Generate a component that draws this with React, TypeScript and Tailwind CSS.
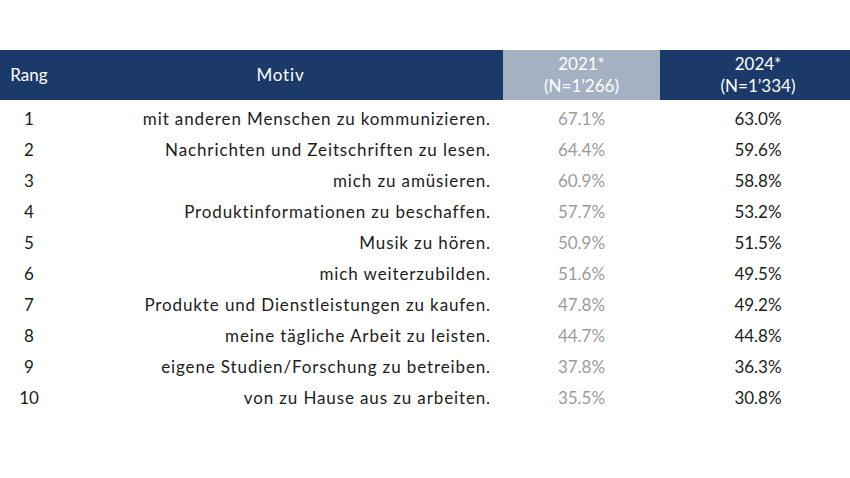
import React from 'react';

interface Row {
  rang: number;
  motiv: string;
  y2021: string;
  y2024: string;
}

const rows: Row[] = [
  { rang: 1, motiv: 'mit anderen Menschen zu kommunizieren.', y2021: '67.1%', y2024: '63.0%' },
  { rang: 2, motiv: 'Nachrichten und Zeitschriften zu lesen.', y2021: '64.4%', y2024: '59.6%' },
  { rang: 3, motiv: 'mich zu amüsieren.', y2021: '60.9%', y2024: '58.8%' },
  { rang: 4, motiv: 'Produktinformationen zu beschaffen.', y2021: '57.7%', y2024: '53.2%' },
  { rang: 5, motiv: 'Musik zu hören.', y2021: '50.9%', y2024: '51.5%' },
  { rang: 6, motiv: 'mich weiterzubilden.', y2021: '51.6%', y2024: '49.5%' },
  { rang: 7, motiv: 'Produkte und Dienstleistungen zu kaufen.', y2021: '47.8%', y2024: '49.2%' },
  { rang: 8, motiv: 'meine tägliche Arbeit zu leisten.', y2021: '44.7%', y2024: '44.8%' },
  { rang: 9, motiv: 'eigene Studien/Forschung zu betreiben.', y2021: '37.8%', y2024: '36.3%' },
  { rang: 10, motiv: 'von zu Hause aus zu arbeiten.', y2021: '35.5%', y2024: '30.8%' },
];

// shared column widths: Rang | Motiv | 2021 | 2024
const cols = 'grid grid-cols-[58px_445px_157px_184px]';

export default function App() {
  return (
    <div className="w-[850px] h-[478px] bg-white pt-[50px] font-['Lato','Open_Sans',sans-serif] text-[17px]">
      {/* Header */}
      <div className={`${cols} h-[50px] bg-[#1b3a69] text-white`}>
        <div className="flex items-center justify-center">Rang</div>
        <div className="flex items-center justify-center tracking-[0.8px]">Motiv</div>
        <div className="flex flex-col items-center justify-center bg-[#a4b1c3] leading-[22px]">
          <span>2021*</span>
          <span>(N=1’266)</span>
        </div>
        <div className="flex flex-col items-center justify-center pl-3 leading-[22px]">
          <span>2024*</span>
          <span>(N=1’334)</span>
        </div>
      </div>

      {/* Body */}
      <div className="pt-[3px]">
        {rows.map((r) => (
          <div key={r.rang} className={`${cols} h-[31px] items-center`}>
            <div className="text-center text-[#1c1c1c]">{r.rang}</div>
            <div className="text-right pr-3 tracking-[0.88px] text-[#1c1c1c]">{r.motiv}</div>
            <div className="text-center text-[#9b9b9b]">{r.y2021}</div>
            <div className="text-center pl-3 text-[#1c1c1c]">{r.y2024}</div>
          </div>
        ))}
      </div>
    </div>
  );
}
